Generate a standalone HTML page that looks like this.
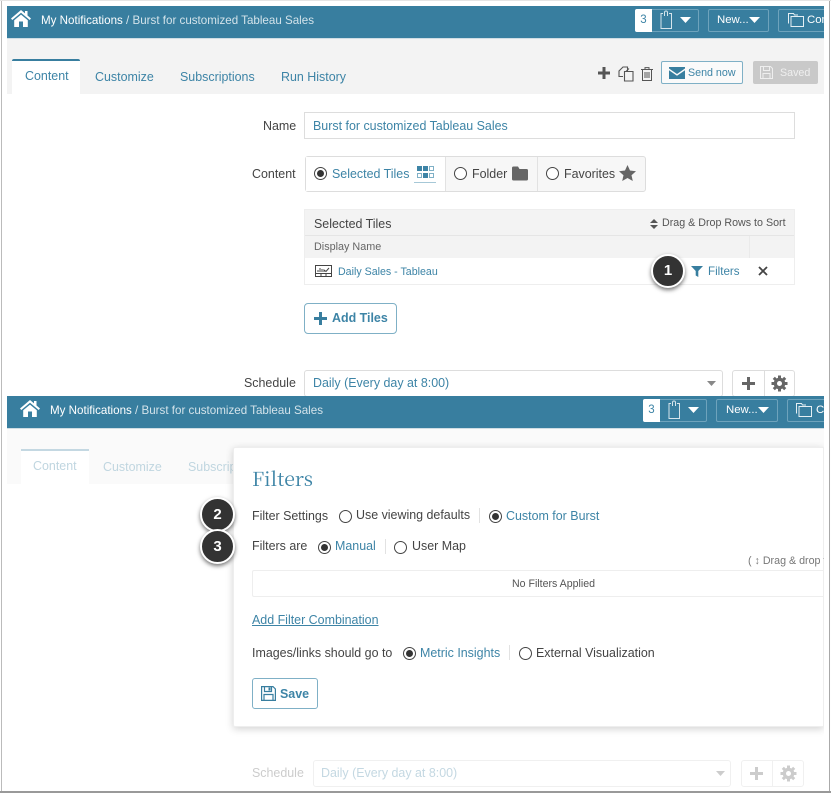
<!DOCTYPE html>
<html><head><meta charset="utf-8"><style>
html,body{margin:0;padding:0;background:#fff}
#r{position:relative;width:831px;height:794px;overflow:hidden;background:#fff;font:12.45px "Liberation Sans",Arial,sans-serif;color:#444;filter:blur(.3px)}
#r *{box-sizing:border-box}
.a{position:absolute}
.t{position:absolute;white-space:nowrap;line-height:16px;margin-top:1px}
.b{color:#3d84a6}
.bar{position:absolute;left:7px;width:817px;height:33px;background:#387e9f;border-bottom:1px solid #cfdde4;overflow:hidden}
.hb{position:absolute;top:3px;height:23px;border:1px solid #6ea3bc;border-radius:2px}
.rad{position:absolute;width:13px;height:13px;border:1px solid #444;border-radius:50%;background:#fff}
.rad.on:after{content:"";position:absolute;left:2px;top:2px;width:7px;height:7px;border-radius:50%;background:#333}
.num{position:absolute;width:32px;height:32px;border-radius:50%;background:#333;border:2px solid #fff;box-shadow:0 2px 4px rgba(0,0,0,.55);color:#fff;font-weight:bold;font-size:15px;line-height:28px;text-align:center}
svg{position:absolute;display:block}
</style></head><body><div id="r">
<div class="a" style="left:1px;top:0;width:1px;height:793px;background:#bbb"></div>
<div class="a" style="left:829px;top:0;width:1px;height:793px;background:#aaa"></div>
<div class="a" style="left:0;top:0;width:831px;height:1px;background:#e4e4e4"></div>
<div class="a" style="left:0;top:791px;width:831px;height:2px;background:#999"></div>

<!-- TOP PAGE -->
<div class="a" style="left:7px;top:38px;width:817px;height:56px;background:#f3f3f3"></div>
<div class="bar" style="top:6px">
 <svg style="left:4px;top:4px" width="20" height="17" viewBox="0 0 20 17"><path d="M10 0 L0 8.5 L1.3 10 L10 2.8 L18.7 10 L20 8.5 L16.5 5.5 V1 H14 V3.4Z M3.2 10.2 V17 H8 V11.5 H12 V17 H16.8 V10.2 L10 4.6Z" fill="#fff"/></svg>
 <div class="t" style="left:34px;top:6px;font-size:11.6px;color:#fff">My Notifications <span style="color:#d3e3ea">/ Burst for customized Tableau Sales</span></div>
 <div class="hb" style="left:628px;width:64px"></div>
 <div class="a" style="left:628px;top:3px;width:17px;height:23px;background:#fff;border-radius:2px 0 0 2px;color:#3d84a6;font-size:11.5px;line-height:23px;text-align:center">3</div>
 <svg style="left:653px;top:4px" width="13" height="20" viewBox="0 0 13 20" fill="none" stroke="#d5e4eb"><path d="M3 3.5H1V18.5H11.500V3.500H9M4.500 6V2.500a1.500 1.500 0 0 1 3 0V6"/></svg>
 <svg style="left:673px;top:11px" width="11" height="6" viewBox="0 0 11 6"><path d="M0 0H11L5.500 6Z" fill="#fff"/></svg>
 <div class="hb" style="left:701px;width:61px"></div>
 <div class="t" style="left:710px;top:5px;font-size:11.4px;color:#fff">New...</div>
 <svg style="left:742px;top:11px" width="11" height="6" viewBox="0 0 11 6"><path d="M0 0H11L5.500 6Z" fill="#fff"/></svg>
 <div class="hb" style="left:771px;width:70px"></div>
 <svg style="left:781px;top:6px" width="16" height="15" viewBox="0 0 16 15" fill="none" stroke="#e5eff3"><path d="M.5 11.500V1.500H5.500L6.500 3H10M3 14.500V4.500H15.500V14.500Z"/></svg>
 <div class="t" style="left:800px;top:5px;font-size:11.4px;color:#fff">Con</div>
</div>

<!-- tabs -->
<div class="a" style="left:12px;top:59px;width:68px;height:35px;background:#fff;border-top:2px solid #387e9f;border-radius:2px 2px 0 0"></div>
<div class="t b" style="left:25px;top:67px">Content</div>
<div class="t b" style="left:95px;top:68px">Customize</div>
<div class="t b" style="left:180px;top:68px">Subscriptions</div>
<div class="t b" style="left:281px;top:68px">Run History</div>

<svg style="left:598px;top:67px" width="12" height="12" viewBox="0 0 12 12"><path d="M4.500 0H7.500V4.500H12V7.500H7.500V12H4.500V7.500H0V4.500H4.500Z" fill="#555"/></svg>
<svg style="left:618px;top:66px" width="16" height="16" viewBox="0 0 16 16" fill="none" stroke="#555" stroke-width="1.100"><path d="M5 10.500H1V5L5 1H9.500V5M6.500 5.500H15V15H6.500Z M8 5.500L11 2.500"/></svg>
<svg style="left:641px;top:67px" width="12" height="14" viewBox="0 0 12 14" fill="none" stroke="#555"><path d="M0 2.500H12M4 2.500V.6H8V2.500M1.500 2.500V13.500H10.500V2.500M4 5V11M6 5V11M8 5V11"/></svg>
<div class="a" style="left:661px;top:61px;width:82px;height:23px;background:#fafafa;border:1px solid #7fb0c6;border-radius:2px"></div>
<svg style="left:669px;top:67px" width="16" height="12" viewBox="0 0 16 12"><path d="M0 0H16V1.500L8 7 0 1.500Z M0 3.300L8 8.800 16 3.300V12H0Z" fill="#387e9f"/></svg>
<div class="t b" style="left:688px;top:64px;font-size:10.7px">Send now</div>
<div class="a" style="left:753px;top:61px;width:65px;height:23px;background:#c9c9c9;border-radius:2px"></div>
<svg style="left:760px;top:66px" width="13" height="13" viewBox="0 0 13 13" fill="none" stroke="#eee"><path d="M.5.5H10.500L12.500 2.500V12.500H.5ZM3.500.5V4.500H9.500V.5M3 12.500V7.500H10V12.500"/></svg>
<div class="t" style="left:780px;top:64px;font-size:10.7px;color:#efefef">Saved</div>

<!-- form -->
<div class="t" style="left:263px;top:117px">Name</div>
<div class="a" style="left:304px;top:112px;width:491px;height:27px;border:1px solid #ddd"></div>
<div class="t b" style="left:313px;top:117px">Burst for customized Tableau Sales</div>

<div class="t" style="left:252px;top:165px">Content</div>
<div class="a" style="left:305px;top:156px;width:341px;height:36px;border:1px solid #ddd;border-radius:3px;background:#f7f7f7"></div>
<div class="a" style="left:306px;top:157px;width:140px;height:34px;background:#fff;border-right:1px solid #e2e2e2"></div>
<div class="a" style="left:537px;top:157px;width:1px;height:34px;background:#e2e2e2"></div>
<div class="rad on" style="left:314px;top:167px"></div>
<div class="t b" style="left:332px;top:165px">Selected Tiles</div>
<svg style="left:414px;top:165px" width="23" height="19" viewBox="0 0 23 19"><g fill="#3d84a6"><rect x="3" y="1" width="5" height="5"/><rect x="9" y="1" width="5" height="5"/><rect x="9" y="8" width="5" height="5"/></g><g fill="none" stroke="#7fb0c6"><rect x="15.500" y="1.500" width="4" height="4"/><rect x="3.500" y="8.500" width="4" height="4"/><rect x="15.500" y="8.500" width="4" height="4"/></g><rect x="0" y="17" width="22" height="1" fill="#a6c8d7"/></svg>
<div class="rad" style="left:454px;top:167px"></div>
<div class="t" style="left:472px;top:165px">Folder</div>
<svg style="left:512px;top:166px" width="16" height="15" viewBox="0 0 16 15"><path d="M0 2a1.500 1.500 0 0 1 1.500-1.500H6L7.500 3H14.500A1.500 1.500 0 0 1 16 4.500V13a1.500 1.500 0 0 1-1.500 1.500H1.500A1.500 1.500 0 0 1 0 13Z" fill="#666"/></svg>
<div class="rad" style="left:546px;top:167px"></div>
<div class="t" style="left:564px;top:165px">Favorites</div>
<svg style="left:619px;top:165px" width="17" height="16" viewBox="0 0 17 16"><path d="M8.500 0L11 5.500 17 6.200 12.500 10.200 13.800 16 8.500 13 3.200 16 4.500 10.200 0 6.200 6 5.500Z" fill="#666"/></svg>

<!-- table -->
<div class="a" style="left:304px;top:209px;width:491px;height:76px;background:#f3f3f3;border:1px solid #eee"></div>
<div class="a" style="left:305px;top:235px;width:489px;height:1px;background:#e5e5e5"></div>
<div class="a" style="left:305px;top:258px;width:489px;height:26px;background:#fff"></div>
<div class="a" style="left:749px;top:236px;width:1px;height:22px;background:#eaeaea"></div>
<div class="t" style="left:314px;top:215px">Selected Tiles</div>
<svg style="left:650px;top:219px" width="8" height="10" viewBox="0 0 8 10"><path d="M4 0L8 4H0ZM0 6H8L4 10Z" fill="#555"/></svg>
<div class="t" style="left:662px;top:214px;font-size:10.7px;color:#555">Drag &amp; Drop Rows to Sort</div>
<div class="t" style="left:314px;top:238px;font-size:10.8px;color:#666">Display Name</div>
<svg style="left:315px;top:265px" width="17" height="12" viewBox="0 0 17 12" fill="none" stroke="#444"><path d="M.5.500H16.500V11.500H.5ZM.5 8.500H16.500M6 8.500V11.500M11 8.500V11.500M3 7V5M5 7V3M7 7V4M9 7V5L11 6.500 14 3" /></svg>
<div class="t b" style="left:338px;top:263px;font-size:10.65px">Daily Sales - Tableau</div>
<div class="num" style="left:651px;top:254px;width:34px;height:34px;line-height:30px">1</div>
<svg style="left:691px;top:266px" width="12" height="11" viewBox="0 0 12 11"><path d="M0 0H12L7.300 5V11L4.700 9.500V5Z" fill="#387e9f"/></svg>
<div class="t b" style="left:708px;top:263px;font-size:11.6px">Filters</div>
<svg style="left:758px;top:266px" width="10" height="10" viewBox="0 0 10 10"><path d="M1 1L9 9M9 1L1 9" stroke="#444" stroke-width="1.800"/></svg>

<div class="a" style="left:304px;top:303px;width:93px;height:31px;border:1px solid #7fb0c6;border-radius:4px"></div>
<svg style="left:314px;top:312px" width="13" height="13" viewBox="0 0 13 13"><path d="M5 0H8V5H13V8H8V13H5V8H0V5H5Z" fill="#387e9f"/></svg>
<div class="t" style="left:332px;top:309px;font-weight:bold;color:#3d84a6">Add Tiles</div>

<div class="t" style="left:244px;top:374px">Schedule</div>
<div class="a" style="left:304px;top:370px;width:419px;height:27px;border:1px solid #ddd;border-radius:3px"></div>
<div class="t b" style="left:313px;top:374px">Daily (Every day at 8:00)</div>
<svg style="left:707px;top:381px" width="9" height="5" viewBox="0 0 9 5"><path d="M0 0H9L4.500 5Z" fill="#888"/></svg>
<div class="a" style="left:732px;top:370px;width:63px;height:27px;border:1px solid #ddd;border-radius:3px"></div>
<div class="a" style="left:764px;top:371px;width:1px;height:25px;background:#ddd"></div>
<svg style="left:742px;top:377px" width="13" height="13" viewBox="0 0 13 13"><path d="M5 0H8V5H13V8H8V13H5V8H0V5H5Z" fill="#666"/></svg>
<svg style="left:771px;top:375px" width="17" height="17" viewBox="0 0 17 17"><path d="M8.500 .5V16.500M.5 8.500H16.500M2.800 2.800L14.200 14.200M14.200 2.800L2.800 14.200" stroke="#666" stroke-width="3"/><circle cx="8.500" cy="8.500" r="5.800" fill="#666"/><circle cx="8.500" cy="8.500" r="2.500" fill="#fff"/></svg>

<!-- SECOND PAGE -->
<div class="a" style="left:7px;top:428px;width:817px;height:56px;background:#fafafa"></div>
<div class="bar" style="top:396px">
 <svg style="left:13px;top:4px" width="20" height="17" viewBox="0 0 20 17"><path d="M10 0 L0 8.500 L1.300 10 L10 2.800 L18.700 10 L20 8.500 L16.500 5.500 V1 H14 V3.400Z M3.200 10.200 V17 H8 V11.500 H12 V17 H16.800 V10.200 L10 4.600Z" fill="#fff"/></svg>
 <div class="t" style="left:43px;top:6px;font-size:11.6px;color:#fff">My Notifications <span style="color:#d3e3ea">/ Burst for customized Tableau Sales</span></div>
 <div class="hb" style="left:636px;width:64px"></div>
 <div class="a" style="left:636px;top:3px;width:17px;height:23px;background:#fff;border-radius:2px 0 0 2px;color:#3d84a6;font-size:11.5px;line-height:23px;text-align:center">3</div>
 <svg style="left:661px;top:4px" width="13" height="20" viewBox="0 0 13 20" fill="none" stroke="#d5e4eb"><path d="M3 3.500H1V18.500H11.500V3.500H9M4.500 6V2.500a1.500 1.500 0 0 1 3 0V6"/></svg>
 <svg style="left:681px;top:11px" width="11" height="6" viewBox="0 0 11 6"><path d="M0 0H11L5.500 6Z" fill="#fff"/></svg>
 <div class="hb" style="left:709px;width:62px"></div>
 <div class="t" style="left:719px;top:5px;font-size:11.4px;color:#fff">New...</div>
 <svg style="left:751px;top:11px" width="11" height="6" viewBox="0 0 11 6"><path d="M0 0H11L5.500 6Z" fill="#fff"/></svg>
 <div class="hb" style="left:780px;width:70px"></div>
 <svg style="left:789px;top:6px" width="16" height="15" viewBox="0 0 16 15" fill="none" stroke="#e5eff3"><path d="M.5 11.500V1.500H5.500L6.500 3H10M3 14.500V4.500H15.500V14.500Z"/></svg>
 <div class="t" style="left:809px;top:5px;font-size:11.4px;color:#fff">C</div>
</div>
<div class="a" style="left:21px;top:449px;width:68px;height:35px;background:#fff;border-top:2px solid #c4d8e2"></div>
<div class="t" style="left:33px;top:457px;color:#c0d6e0">Content</div>
<div class="t" style="left:103px;top:458px;color:#c0d6e0">Customize</div>
<div class="t" style="left:188px;top:458px;color:#c0d6e0">Subscriptions</div>

<div class="t" style="left:252px;top:764px;color:#ccc">Schedule</div>
<div class="a" style="left:313px;top:760px;width:418px;height:27px;border:1px solid #f0f0f0;border-radius:3px"></div>
<div class="t" style="left:321px;top:764px;color:#c4d8e2">Daily (Every day at 8:00)</div>
<svg style="left:716px;top:771px" width="9" height="5" viewBox="0 0 9 5"><path d="M0 0H9L4.500 5Z" fill="#ccc"/></svg>
<div class="a" style="left:741px;top:760px;width:63px;height:27px;border:1px solid #f0f0f0;border-radius:3px"></div>
<div class="a" style="left:772px;top:761px;width:1px;height:25px;background:#f0f0f0"></div>
<svg style="left:750px;top:767px" width="13" height="13" viewBox="0 0 13 13"><path d="M5 0H8V5H13V8H8V13H5V8H0V5H5Z" fill="#ccc"/></svg>
<svg style="left:780px;top:765px" width="17" height="17" viewBox="0 0 17 17"><path d="M8.500 .5V16.500M.5 8.500H16.500M2.800 2.800L14.200 14.200M14.200 2.800L2.800 14.200" stroke="#ccc" stroke-width="3"/><circle cx="8.500" cy="8.500" r="5.800" fill="#ccc"/><circle cx="8.500" cy="8.500" r="2.500" fill="#fff"/></svg>

<!-- modal -->
<div class="a" style="left:233px;top:447px;width:591px;height:280px;background:#fff;border:1px solid #eee;border-radius:2px 0 0 2px;box-shadow:0 2px 8px rgba(0,0,0,.18)"></div>
<div class="a" style="left:824px;top:430px;width:5px;height:361px;background:#fff"></div>
<div class="t" style="left:252px;top:465px;font:19.5px/24px 'Noto Serif CJK SC','Liberation Serif',serif;color:#3d84a6">Filters</div>
<div class="t" style="left:252px;top:507px">Filter Settings</div>
<div class="rad" style="left:339px;top:510px"></div>
<div class="t" style="left:356px;top:506px">Use viewing defaults</div>
<div class="a" style="left:479px;top:508px;width:1px;height:15px;background:#e2e2e2"></div>
<div class="rad on" style="left:489px;top:510px"></div>
<div class="t b" style="left:506px;top:507px">Custom for Burst</div>
<div class="num" style="left:200px;top:497px;width:35px;height:35px;line-height:31px">2</div>
<div class="t" style="left:252px;top:537px">Filters are</div>
<div class="rad on" style="left:318px;top:541px"></div>
<div class="t b" style="left:335px;top:537px">Manual</div>
<div class="a" style="left:385px;top:539px;width:1px;height:15px;background:#e2e2e2"></div>
<div class="rad" style="left:394px;top:541px"></div>
<div class="t" style="left:412px;top:537px">User Map</div>
<div class="num" style="left:200px;top:529px;width:35px;height:35px;line-height:31px">3</div>
<div class="t" style="left:748px;top:552px;width:76px;overflow:hidden;font-size:10.7px;color:#777">( ↕ Drag &amp; drop to</div>
<div class="a" style="left:252px;top:570px;width:572px;height:27px;border:1px solid #eee;border-right:0;border-radius:2px 0 0 2px"></div>
<div class="t" style="left:512px;top:575px;font-size:10.6px;color:#555">No Filters Applied</div>
<div class="t b" style="left:252px;top:611px;text-decoration:underline">Add Filter Combination</div>
<div class="t" style="left:252px;top:644px">Images/links should go to</div>
<div class="rad on" style="left:403px;top:647px"></div>
<div class="t b" style="left:420px;top:644px">Metric Insights</div>
<div class="a" style="left:509px;top:645px;width:1px;height:15px;background:#e2e2e2"></div>
<div class="rad" style="left:519px;top:647px"></div>
<div class="t" style="left:536px;top:644px">External Visualization</div>
<div class="a" style="left:252px;top:678px;width:66px;height:31px;border:1px solid #7fb0c6;border-radius:3px"></div>
<svg style="left:261px;top:686px" width="15" height="15" viewBox="0 0 15 15" fill="none" stroke="#387e9f" stroke-width="1.200"><path d="M.6.6H12L14.400 3V14.400H.6ZM3.500.6V5.500H10.500V.6M3 14.400V8.500H12V14.400"/><rect x="7.500" y="1.500" width="2" height="3" fill="#387e9f" stroke="none"/></svg>
<div class="t" style="left:280px;top:685px;font-weight:bold;color:#3d84a6">Save</div>
</div></body></html>
